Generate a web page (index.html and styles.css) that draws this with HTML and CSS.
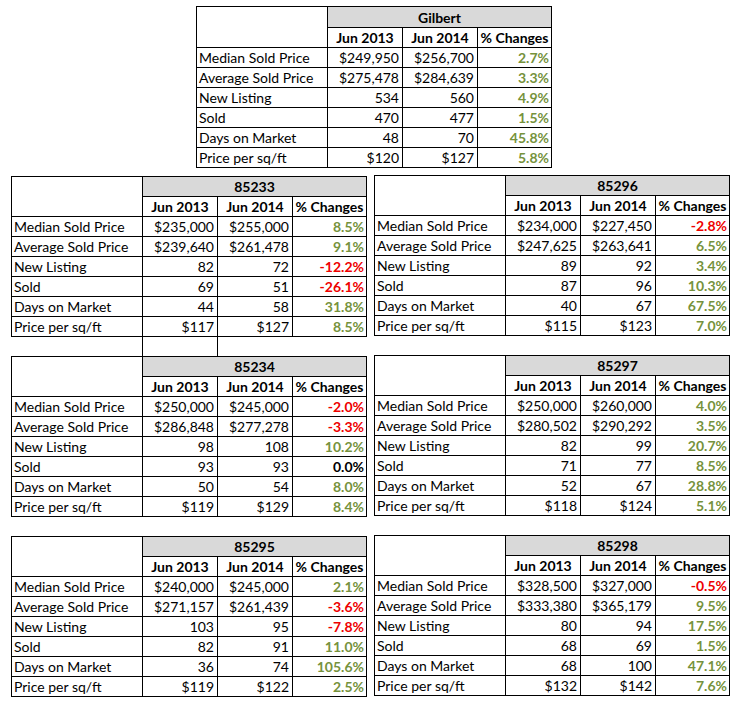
FILE: index.html
```html
<!DOCTYPE html>
<html>
<head>
<meta charset="utf-8">
<link rel="stylesheet" href="styles.css">
</head>
<body>
<div class="page">
  <div class="top">
    <table class="stats big">
      <colgroup><col class="c-lbl"><col class="c-num"><col class="c-num"><col class="c-pct"></colgroup>
      <tr><td class="blank" rowspan="2"></td><td class="title" colspan="3">Gilbert</td></tr>
      <tr><td class="hd">Jun 2013</td><td class="hd">Jun 2014</td><td class="hd">% Changes</td></tr>
      <tr><td class="lbl">Median Sold Price</td><td class="num">$249,950</td><td class="num">$256,700</td><td class="pct up">2.7%</td></tr>
      <tr><td class="lbl">Average Sold Price</td><td class="num">$275,478</td><td class="num">$284,639</td><td class="pct up">3.3%</td></tr>
      <tr><td class="lbl">New Listing</td><td class="num">534</td><td class="num">560</td><td class="pct up">4.9%</td></tr>
      <tr><td class="lbl">Sold</td><td class="num">470</td><td class="num">477</td><td class="pct up">1.5%</td></tr>
      <tr><td class="lbl">Days on Market</td><td class="num">48</td><td class="num">70</td><td class="pct up">45.8%</td></tr>
      <tr><td class="lbl">Price per sq/ft</td><td class="num">$120</td><td class="num">$127</td><td class="pct up">5.8%</td></tr>
    </table>
  </div>
  <div class="grid">
    <div class="col col-left">
      <table class="stats">
        <colgroup><col class="c-lbl"><col class="c-num"><col class="c-num"><col class="c-pct"></colgroup>
        <tr><td class="blank" rowspan="2"></td><td class="title" colspan="3">85233</td></tr>
        <tr><td class="hd">Jun 2013</td><td class="hd">Jun 2014</td><td class="hd">% Changes</td></tr>
        <tr><td class="lbl">Median Sold Price</td><td class="num">$235,000</td><td class="num">$255,000</td><td class="pct up">8.5%</td></tr>
        <tr><td class="lbl">Average Sold Price</td><td class="num">$239,640</td><td class="num">$261,478</td><td class="pct up">9.1%</td></tr>
        <tr><td class="lbl">New Listing</td><td class="num">82</td><td class="num">72</td><td class="pct down">-12.2%</td></tr>
        <tr><td class="lbl">Sold</td><td class="num">69</td><td class="num">51</td><td class="pct down">-26.1%</td></tr>
        <tr><td class="lbl">Days on Market</td><td class="num">44</td><td class="num">58</td><td class="pct up">31.8%</td></tr>
        <tr><td class="lbl">Price per sq/ft</td><td class="num">$117</td><td class="num">$127</td><td class="pct up">8.5%</td></tr>
      </table>
      <div class="stub"></div>
      <table class="stats">
        <colgroup><col class="c-lbl"><col class="c-num"><col class="c-num"><col class="c-pct"></colgroup>
        <tr><td class="blank" rowspan="2"></td><td class="title" colspan="3">85234</td></tr>
        <tr><td class="hd">Jun 2013</td><td class="hd">Jun 2014</td><td class="hd">% Changes</td></tr>
        <tr><td class="lbl">Median Sold Price</td><td class="num">$250,000</td><td class="num">$245,000</td><td class="pct down">-2.0%</td></tr>
        <tr><td class="lbl">Average Sold Price</td><td class="num">$286,848</td><td class="num">$277,278</td><td class="pct down">-3.3%</td></tr>
        <tr><td class="lbl">New Listing</td><td class="num">98</td><td class="num">108</td><td class="pct up">10.2%</td></tr>
        <tr><td class="lbl">Sold</td><td class="num">93</td><td class="num">93</td><td class="pct flat">0.0%</td></tr>
        <tr><td class="lbl">Days on Market</td><td class="num">50</td><td class="num">54</td><td class="pct up">8.0%</td></tr>
        <tr><td class="lbl">Price per sq/ft</td><td class="num">$119</td><td class="num">$129</td><td class="pct up">8.4%</td></tr>
      </table>
      <table class="stats spaced">
        <colgroup><col class="c-lbl"><col class="c-num"><col class="c-num"><col class="c-pct"></colgroup>
        <tr><td class="blank" rowspan="2"></td><td class="title" colspan="3">85295</td></tr>
        <tr><td class="hd">Jun 2013</td><td class="hd">Jun 2014</td><td class="hd">% Changes</td></tr>
        <tr><td class="lbl">Median Sold Price</td><td class="num">$240,000</td><td class="num">$245,000</td><td class="pct up">2.1%</td></tr>
        <tr><td class="lbl">Average Sold Price</td><td class="num">$271,157</td><td class="num">$261,439</td><td class="pct down">-3.6%</td></tr>
        <tr><td class="lbl">New Listing</td><td class="num">103</td><td class="num">95</td><td class="pct down">-7.8%</td></tr>
        <tr><td class="lbl">Sold</td><td class="num">82</td><td class="num">91</td><td class="pct up">11.0%</td></tr>
        <tr><td class="lbl">Days on Market</td><td class="num">36</td><td class="num">74</td><td class="pct up">105.6%</td></tr>
        <tr><td class="lbl">Price per sq/ft</td><td class="num">$119</td><td class="num">$122</td><td class="pct up">2.5%</td></tr>
      </table>
    </div>
    <div class="col col-right">
      <table class="stats">
        <colgroup><col class="c-lbl"><col class="c-num"><col class="c-num"><col class="c-pct"></colgroup>
        <tr><td class="blank" rowspan="2"></td><td class="title" colspan="3">85296</td></tr>
        <tr><td class="hd">Jun 2013</td><td class="hd">Jun 2014</td><td class="hd">% Changes</td></tr>
        <tr><td class="lbl">Median Sold Price</td><td class="num">$234,000</td><td class="num">$227,450</td><td class="pct down">-2.8%</td></tr>
        <tr><td class="lbl">Average Sold Price</td><td class="num">$247,625</td><td class="num">$263,641</td><td class="pct up">6.5%</td></tr>
        <tr><td class="lbl">New Listing</td><td class="num">89</td><td class="num">92</td><td class="pct up">3.4%</td></tr>
        <tr><td class="lbl">Sold</td><td class="num">87</td><td class="num">96</td><td class="pct up">10.3%</td></tr>
        <tr><td class="lbl">Days on Market</td><td class="num">40</td><td class="num">67</td><td class="pct up">67.5%</td></tr>
        <tr><td class="lbl">Price per sq/ft</td><td class="num">$115</td><td class="num">$123</td><td class="pct up">7.0%</td></tr>
      </table>
      <table class="stats spaced">
        <colgroup><col class="c-lbl"><col class="c-num"><col class="c-num"><col class="c-pct"></colgroup>
        <tr><td class="blank" rowspan="2"></td><td class="title" colspan="3">85297</td></tr>
        <tr><td class="hd">Jun 2013</td><td class="hd">Jun 2014</td><td class="hd">% Changes</td></tr>
        <tr><td class="lbl">Median Sold Price</td><td class="num">$250,000</td><td class="num">$260,000</td><td class="pct up">4.0%</td></tr>
        <tr><td class="lbl">Average Sold Price</td><td class="num">$280,502</td><td class="num">$290,292</td><td class="pct up">3.5%</td></tr>
        <tr><td class="lbl">New Listing</td><td class="num">82</td><td class="num">99</td><td class="pct up">20.7%</td></tr>
        <tr><td class="lbl">Sold</td><td class="num">71</td><td class="num">77</td><td class="pct up">8.5%</td></tr>
        <tr><td class="lbl">Days on Market</td><td class="num">52</td><td class="num">67</td><td class="pct up">28.8%</td></tr>
        <tr><td class="lbl">Price per sq/ft</td><td class="num">$118</td><td class="num">$124</td><td class="pct up">5.1%</td></tr>
      </table>
      <table class="stats spaced">
        <colgroup><col class="c-lbl"><col class="c-num"><col class="c-num"><col class="c-pct"></colgroup>
        <tr><td class="blank" rowspan="2"></td><td class="title" colspan="3">85298</td></tr>
        <tr><td class="hd">Jun 2013</td><td class="hd">Jun 2014</td><td class="hd">% Changes</td></tr>
        <tr><td class="lbl">Median Sold Price</td><td class="num">$328,500</td><td class="num">$327,000</td><td class="pct down">-0.5%</td></tr>
        <tr><td class="lbl">Average Sold Price</td><td class="num">$333,380</td><td class="num">$365,179</td><td class="pct up">9.5%</td></tr>
        <tr><td class="lbl">New Listing</td><td class="num">80</td><td class="num">94</td><td class="pct up">17.5%</td></tr>
        <tr><td class="lbl">Sold</td><td class="num">68</td><td class="num">69</td><td class="pct up">1.5%</td></tr>
        <tr><td class="lbl">Days on Market</td><td class="num">68</td><td class="num">100</td><td class="pct up">47.1%</td></tr>
        <tr><td class="lbl">Price per sq/ft</td><td class="num">$132</td><td class="num">$142</td><td class="pct up">7.6%</td></tr>
      </table>
    </div>
  </div>
</div>
</body>
</html>
```

FILE: styles.css
```css
html, body {
  margin: 0;
  padding: 0;
  background: #ffffff;
}

.page {
  width: 738px;
  height: 708px;
  padding-top: 6px;
  box-sizing: border-box;
  font-family: Lato, "Open Sans", sans-serif;
  font-size: 14px;
  color: #000000;
}

.top {
  padding-left: 196px;
}

.grid {
  display: grid;
  grid-template-columns: 356px 357px;
  column-gap: 7px;
  padding-left: 11px;
  align-items: start;
}

.col {
  display: flex;
  flex-direction: column;
  align-items: flex-start;
}

.col-left {
  margin-top: 8px;
}

.col-right {
  margin-top: 7px;
}

.stats {
  width: 356px;
  border-collapse: separate;
  border-spacing: 0;
  border-top: 1px solid #000;
  border-left: 1px solid #000;
  table-layout: fixed;
}

.stats .c-lbl { width: 131px; }
.stats .c-num { width: 75px; }
.stats .c-pct { width: 74px; }

.stats.spaced {
  margin-top: 19px;
}

.stats td {
  border-right: 1px solid #000;
  border-bottom: 1px solid #000;
  height: 19px;
  padding: 0 2px;
  line-height: 19px;
  vertical-align: bottom;
  white-space: nowrap;
  overflow: hidden;
}

.stats .blank { padding: 0; }

.stats .title {
  background: #d9d9d9;
  font-weight: 700;
  text-align: center;
}

.stats.big .title {
  height: 20px;
}

.stats .hd {
  font-weight: 700;
  text-align: center;
  padding: 0;
}

.stats .lbl {
  text-align: left;
  padding-left: 2px;
}

.stats .num {
  text-align: right;
  padding-right: 3px;
}

.stats .pct {
  text-align: right;
  font-weight: 700;
  padding-right: 2px;
}

.up { color: #76923c; }
.down { color: #ee0000; }
.flat { color: #000000; }

.stub {
  margin-left: 131px;
  width: 74px;
  height: 19px;
  border-left: 1px solid #000;
  border-right: 1px solid #000;
}
```
